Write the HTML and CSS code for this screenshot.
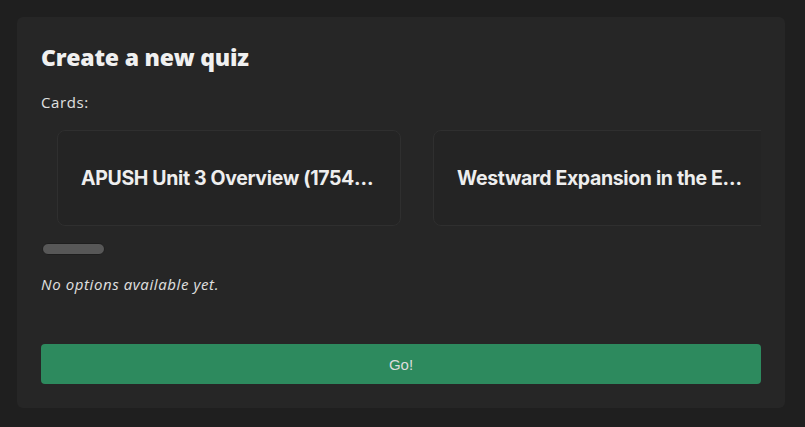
FILE: index.html
```html
<!DOCTYPE html>
<html>
<head>
<meta charset="utf-8">
<link rel="stylesheet" href="styles.css">
</head>
<body>
<div class="panel">
  <h1 class="title">Create a new quiz</h1>
  <div class="label">Cards:</div>
  <div class="carousel">
    <div class="track">
      <div class="set-card"><span class="set-name">APUSH Unit 3 Overview (1754-1800)</span></div>
      <div class="set-card"><span class="set-name">Westward Expansion in the Early Republic</span></div>
    </div>
  </div>
  <div class="scrollbar"><div class="thumb"></div></div>
  <p class="empty">No options available yet.</p>
  <button class="go">Go!</button>
</div>
</body>
</html>
```
FILE: styles.css
```css
html, body { margin: 0; padding: 0; }
body {
  background: #1f1f1f;
  font-family: "Open Sans", "Liberation Sans", sans-serif;
  color: #e8e8e8;
  padding: 17px 20px 19px 17px;
  box-sizing: border-box;
  width: 805px;
  height: 427px;
}
.panel {
  background: #262626;
  border-radius: 6px;
  padding: 24px 24px 24px 24px;
  display: flex;
  flex-direction: column;
  height: 391px;
  box-sizing: border-box;
}
.title {
  margin: 0;
  font-size: 23px;
  font-weight: 800;
  line-height: 32px;
  color: #f0f0f0;
  letter-spacing: -0.2px;
}
.label {
  margin-top: 19px;
  font-size: 15px;
  line-height: 20px;
  color: #e0e0e0;
  letter-spacing: 0.6px;
}
.carousel {
  margin-top: 18px;
  overflow: hidden;
  width: 720px;
}
.track {
  display: flex;
  gap: 32px;
  padding-left: 16px;
}
.set-card {
  flex: 0 0 344px;
  width: 344px;
  min-width: 0;
  height: 96px;
  box-sizing: border-box;
  border: 1px solid #2f2f2f;
  border-radius: 8px;
  background: #242424;
  display: flex;
  align-items: center;
  justify-content: center;
  padding: 0 23px;
}
.set-name {
  display: block;
  min-width: 0;
  max-width: 100%;
  font-family: Inter, "Liberation Sans", sans-serif;
  font-weight: 700;
  font-size: 19.5px;
  color: #eeeeee;
  white-space: nowrap;
  overflow: hidden;
  text-overflow: ellipsis;
  letter-spacing: -0.35px;
}
.scrollbar {
  margin-top: 17px;
  height: 13px;
}
.thumb {
  width: 63px;
  height: 12px;
  margin-left: 1px;
  background: #575757;
  border: 1px solid #1e1e1e;
  border-radius: 6px;
  box-sizing: border-box;
}
.empty {
  margin: 17px 0 0 0;
  font-style: italic;
  font-size: 15px;
  line-height: 22px;
  color: #e0e0e0;
  letter-spacing: 0.6px;
}
.go {
  margin-top: auto;
  height: 40px;
  border: none;
  border-radius: 4px;
  background: #2d8a5e;
  color: #dcdcdc;
  font-family: "Liberation Sans", sans-serif;
  font-size: 15px;
  width: 100%;
}
```
